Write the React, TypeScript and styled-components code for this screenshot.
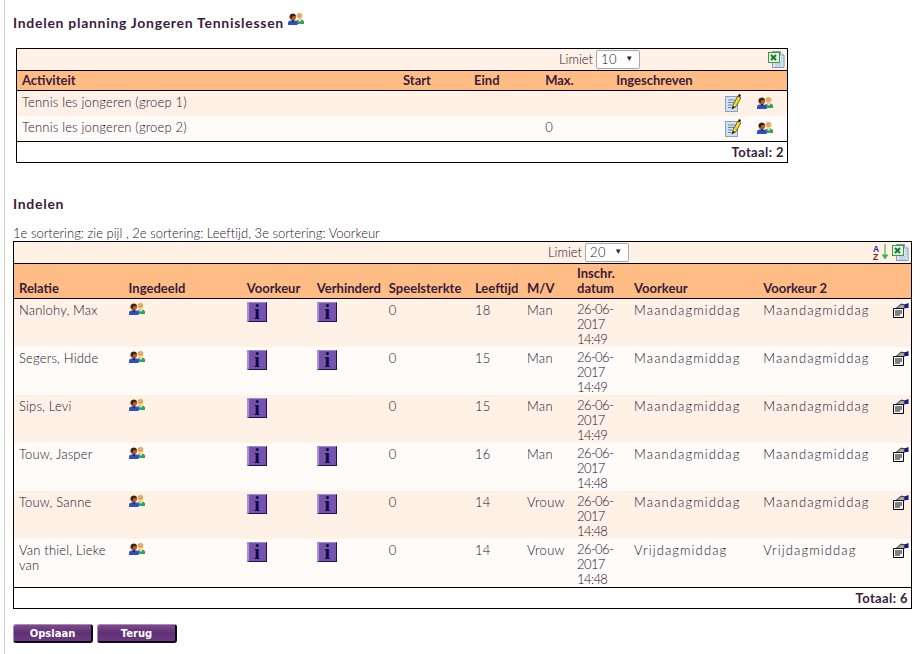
import React from 'react';
import styled, { createGlobalStyle } from 'styled-components';

const GlobalStyle = createGlobalStyle`
  html, body {
    margin: 0;
    padding: 0;
    background: #fff;
  }
  body {
    font-family: Lato, "Open Sans", sans-serif;
    font-size: 13px;
    line-height: 15px;
    font-weight: 300;
    color: #1f1030;
  }
`;

const Page = styled.div`
  box-sizing: border-box;
  width: 924px;
  height: 654px;
  overflow: hidden;
  margin-left: 4px;
  padding: 13px 0 0 8px;
  border-left: 1px solid #cfcfcf;
`;

const Title = styled.h2`
  margin: 0;
  height: 22px;
  display: flex;
  align-items: flex-start;
  gap: 4px;
  font-size: 14px;
  line-height: 20px;
  font-weight: 700;
  letter-spacing: 0.71px;
  color: #3a1c3c;
`;

const SubTitle = styled(Title)`
  margin-top: 31px;
  height: 20px;
`;

const Note = styled.div`
  margin-top: 12px;
  height: 15px;
  letter-spacing: 0.01px;
  white-space: nowrap;
`;

const Table = styled.table<{ $width: number; $indent?: number }>`
  table-layout: fixed;
  border-collapse: collapse;
  width: ${(p) => p.$width}px;
  margin-left: ${(p) => p.$indent ?? 0}px;
  border: 1px solid #000;
`;

const FirstTable = styled(Table)`
  margin-top: 13px;
`;

const ToolbarCell = styled.td`
  height: 21px;
  padding: 0;
  background: #fff1e6;
  border-bottom: 1px solid #000;
`;

const Toolbar = styled.div`
  display: flex;
  align-items: center;
  height: 21px;
  padding-right: 2px;
`;

const Limit = styled.label<{ $offset: number }>`
  display: flex;
  align-items: center;
  gap: 3px;
  margin-left: ${(p) => p.$offset}px;
`;

const SelectWrap = styled.span`
  position: relative;
  display: block;
  &::after {
    content: '▼';
    position: absolute;
    right: 7px;
    top: 1px;
    font-family: "DejaVu Sans", sans-serif;
    font-size: 8px;
    line-height: 15px;
    color: #3a1c3c;
    pointer-events: none;
  }
`;

const Select = styled.select`
  appearance: none;
  display: block;
  box-sizing: border-box;
  width: 44px;
  height: 19px;
  padding: 0 0 0 4px;
  border: 1px solid #a9a9a9;
  border-radius: 2px;
  background: #fff;
  font: inherit;
  letter-spacing: 0.4px;
  color: #1f1030;
`;

const ToolIcons = styled.div`
  display: flex;
  align-items: center;
  gap: 1px;
  margin-left: auto;
`;

const HeadCell = styled.th`
  padding: 2px 0 2px 5px;
  background: #ffbc85;
  border-bottom: 1px solid #000;
  text-align: left;
  vertical-align: bottom;
  font-weight: 700;
  letter-spacing: 0;
  color: #3a1c3c;
`;

const Row = styled.tr<{ $odd: boolean }>`
  background: ${(p) => (p.$odd ? '#fff1e6' : '#fffbf8')};
`;

const Cell = styled.td`
  padding: 4px 0 0 5px;
  vertical-align: top;
  letter-spacing: 0.17px;
`;

const ShortRowCell = styled(Cell)`
  height: 23px;
  vertical-align: middle;
  padding-top: 0;
  padding-bottom: 2px;
`;

const TallRowCell = styled(Cell)<{ $track?: number }>`
  height: 44px;
  letter-spacing: ${(p) => p.$track ?? 0.17}px;
`;

const DateCell = styled(TallRowCell)`
  height: 45px;
  padding-top: 3px;
  font-size: 13px;
  letter-spacing: -0.6px;
`;

const TotalCell = styled.td`
  height: 20px;
  padding: 0 3px 0 0;
  border-top: 1px solid #000;
  background: #fff;
  text-align: right;
  font-weight: 700;
  letter-spacing: 0.4px;
  color: #3a1c3c;
`;

const InfoButton = styled.span`
  display: block;
  box-sizing: border-box;
  width: 20px;
  height: 20px;
  margin-top: -1px;
  background: #7452ae;
  border-style: solid;
  border-width: 1px 1px 1px 2px;
  border-color: #9d86c9 #1d1650 #1d1650 #a793cf;
  text-align: center;
  font-family: "Liberation Serif", serif;
  font-size: 20px;
  font-weight: 700;
  line-height: 18px;
  color: #0d0a40;
`;

const Buttons = styled.div`
  display: flex;
  gap: 4px;
  margin-top: 15px;
`;

const Button = styled.button<{ $width: number }>`
  box-sizing: border-box;
  width: ${(p) => p.$width}px;
  height: 19px;
  padding: 0;
  border-style: solid;
  border-width: 1px 2px 2px 1px;
  border-color: #a88bb8 #120518 #120518 #a88bb8;
  border-radius: 3px;
  background: linear-gradient(#7d4a8c, #5f2f74 50%, #6b3a80);
  font-family: "DejaVu Sans", sans-serif;
  font-size: 10px;
  font-weight: 700;
  color: #fff;
`;

const IconSvg = styled.svg`
  display: block;
`;

const PeopleIcon = () => (
  <IconSvg width="16" height="12" viewBox="0 0 16 12">
    <ellipse cx="11.5" cy="2.8" rx="2.8" ry="2.8" fill="#f0a84c" />
    <path d="M8.7 2.4C8.9.2 14.1.2 14.3 2.4z" fill="#d8b070" />
    <path d="M8 11V8.5C8 7 9.8 6.4 11.8 6.4s4.2.6 4.2 2.1V11z" fill="#3f9d5a" />
    <rect x="10.5" y="6.4" width="2.5" height="2" fill="#d8f0d8" />
    <ellipse cx="4.8" cy="4" rx="3.2" ry="3.4" fill="#c9541a" />
    <path d="M1.6 4.4C1 .2 7.6-.6 8 3.4L7 2.8 4 3.4 3.4 6.2z" fill="#2a2624" />
    <path d="M0 12V9.6C0 8 2.4 7.2 5 7.2s4.6.8 4.6 2.4V12z" fill="#2c50c8" />
    <rect x="4" y="7.2" width="2" height="1.6" fill="#14206a" />
  </IconSvg>
);

const ExcelIcon = () => (
  <IconSvg width="17" height="17" viewBox="0 0 17 17">
    <path d="M4.5.5h8l3.5 3.5v12.5H4.5z" fill="#dce9f5" stroke="#7f9db9" />
    <path d="M12.5.5V4H16" fill="#fff" stroke="#7f9db9" />
    <path d="M7 13h7M7 15h7M13 7h2M13 10h2" stroke="#a9c1da" />
    <rect x="0.5" y="1.5" width="11" height="10" fill="#e5f3e0" stroke="#3c9a45" />
    <path d="M3 4l5 5M8 4l-5 5" stroke="#1b7a2a" strokeWidth="2" />
  </IconSvg>
);

const SortIcon = () => (
  <IconSvg width="19" height="17" viewBox="0 0 19 17">
    <text x="1" y="7.5" fontFamily="Liberation Sans, sans-serif" fontSize="8.5" fontWeight="700" fill="#1c1c9c">A</text>
    <text x="1" y="16" fontFamily="Liberation Sans, sans-serif" fontSize="8.5" fontWeight="700" fill="#8c1414">Z</text>
    <path d="M13 0v14" stroke="#2f9e3f" />
    <path d="M9.5 10.5h7L13 15.5z" fill="#3cb54a" />
  </IconSvg>
);

const NoteIcon = () => (
  <IconSvg width="16" height="18" viewBox="0 0 16 18">
    <rect x="0.5" y="2.5" width="12" height="15" fill="#cfe2f2" stroke="#8f9cc4" />
    <path d="M3 6h7M3 8.5h6M3 11h4M3 13.5h3" stroke="#6e86ad" />
    <path d="M7 15l1-4 5-9 3 1.6-5 9z" fill="#f6e01e" stroke="#2a2a10" strokeWidth="0.7" />
    <path d="M13 2l1-2 2 1-1 2z" fill="#111" />
    <path d="M7 15l1-3 2 1z" fill="#111" />
  </IconSvg>
);

const PropertiesIcon = () => (
  <IconSvg width="17" height="15" viewBox="0 0 17 15">
    <path d="M1.5 5.5h10v9h-10z" fill="#fff" stroke="#000" />
    <path d="M3 8h7M3 10h7M3 12h5" stroke="#000" />
    <path d="M4 5.5L9 1l4 1v3l-2 .5z" fill="#a8a8a8" stroke="#000" strokeWidth="0.8" />
    <path d="M12.5 1.5L16.5 0v5h-3.5z" fill="#14148a" />
  </IconSvg>
);

interface Activity {
  name: string;
  max?: number;
}

interface Person {
  name: string;
  blocked: boolean;
  age: number;
  gender: string;
  date: string;
  time: string;
  pref: string;
}

const activities: Activity[] = [
  { name: 'Tennis les jongeren (groep 1)' },
  { name: 'Tennis les jongeren (groep 2)', max: 0 },
];

const people: Person[] = [
  { name: 'Nanlohy, Max', blocked: true, age: 18, gender: 'Man', date: '26-06-2017', time: '14:49', pref: 'Maandagmiddag' },
  { name: 'Segers, Hidde', blocked: true, age: 15, gender: 'Man', date: '26-06-2017', time: '14:49', pref: 'Maandagmiddag' },
  { name: 'Sips, Levi', blocked: false, age: 15, gender: 'Man', date: '26-06-2017', time: '14:49', pref: 'Maandagmiddag' },
  { name: 'Touw, Jasper', blocked: true, age: 16, gender: 'Man', date: '26-06-2017', time: '14:48', pref: 'Maandagmiddag' },
  { name: 'Touw, Sanne', blocked: true, age: 14, gender: 'Vrouw', date: '26-06-2017', time: '14:48', pref: 'Maandagmiddag' },
  { name: 'Van thiel, Lieke van', blocked: true, age: 14, gender: 'Vrouw', date: '26-06-2017', time: '14:48', pref: 'Vrijdagmiddag' },
];

const planWidths = [381, 71, 71, 71, 109, 32, 35];
const peopleWidths = [110, 118, 70, 72, 86, 52, 50, 57, 129, 129, 24];

const Columns: React.FC<{ widths: number[] }> = ({ widths }) => (
  <colgroup>
    {widths.map((w, i) => (
      <col key={i} width={w} />
    ))}
  </colgroup>
);

const App: React.FC = () => (
  <Page>
    <GlobalStyle />
    <Title>
      Indelen planning Jongeren Tennislessen
      <PeopleIcon />
    </Title>

    <FirstTable $width={772} $indent={3}>
      <Columns widths={planWidths} />
      <tbody>
        <tr>
          <ToolbarCell colSpan={7}>
            <Toolbar>
              <Limit $offset={542}>
                Limiet
                <SelectWrap>
                  <Select defaultValue="10">
                    <option>10</option>
                    <option>20</option>
                  </Select>
                </SelectWrap>
              </Limit>
              <ToolIcons>
                <ExcelIcon />
              </ToolIcons>
            </Toolbar>
          </ToolbarCell>
        </tr>
        <tr>
          <HeadCell>Activiteit</HeadCell>
          <HeadCell>Start</HeadCell>
          <HeadCell>Eind</HeadCell>
          <HeadCell>Max.</HeadCell>
          <HeadCell>Ingeschreven</HeadCell>
          <HeadCell />
          <HeadCell />
        </tr>
        {activities.map((a, i) => (
          <Row key={a.name} $odd={i % 2 === 0}>
            <ShortRowCell>{a.name}</ShortRowCell>
            <ShortRowCell />
            <ShortRowCell />
            <ShortRowCell>{a.max}</ShortRowCell>
            <ShortRowCell />
            <ShortRowCell><NoteIcon /></ShortRowCell>
            <ShortRowCell><PeopleIcon /></ShortRowCell>
          </Row>
        ))}
        <tr>
          <TotalCell colSpan={7}>Totaal: 2</TotalCell>
        </tr>
      </tbody>
    </FirstTable>

    <SubTitle>Indelen</SubTitle>
    <Note>1e sortering: zie pijl , 2e sortering: Leeftijd, 3e sortering: Voorkeur</Note>

    <Table $width={899}>
      <Columns widths={peopleWidths} />
      <tbody>
        <tr>
          <ToolbarCell colSpan={11}>
            <Toolbar>
              <Limit $offset={534}>
                Limiet
                <SelectWrap>
                  <Select defaultValue="20">
                    <option>10</option>
                    <option>20</option>
                  </Select>
                </SelectWrap>
              </Limit>
              <ToolIcons>
                <SortIcon />
                <ExcelIcon />
              </ToolIcons>
            </Toolbar>
          </ToolbarCell>
        </tr>
        <tr>
          <HeadCell>Relatie</HeadCell>
          <HeadCell>Ingedeeld</HeadCell>
          <HeadCell>Voorkeur</HeadCell>
          <HeadCell>Verhinderd</HeadCell>
          <HeadCell>Speelsterkte</HeadCell>
          <HeadCell>Leeftijd</HeadCell>
          <HeadCell>M/V</HeadCell>
          <HeadCell>Inschr. datum</HeadCell>
          <HeadCell>Voorkeur</HeadCell>
          <HeadCell>Voorkeur 2</HeadCell>
          <HeadCell />
        </tr>
        {people.map((p, i) => (
          <Row key={p.name} $odd={i % 2 === 0}>
            <TallRowCell>{p.name}</TallRowCell>
            <TallRowCell><PeopleIcon /></TallRowCell>
            <TallRowCell><InfoButton>i</InfoButton></TallRowCell>
            <TallRowCell>{p.blocked && <InfoButton>i</InfoButton>}</TallRowCell>
            <TallRowCell>0</TallRowCell>
            <TallRowCell>{p.age}</TallRowCell>
            <TallRowCell $track={0.3}>{p.gender}</TallRowCell>
            <DateCell>{p.date} {p.time}</DateCell>
            <TallRowCell $track={1.1}>{p.pref}</TallRowCell>
            <TallRowCell $track={1.1}>{p.pref}</TallRowCell>
            <TallRowCell><PropertiesIcon /></TallRowCell>
          </Row>
        ))}
        <tr>
          <TotalCell colSpan={11}>Totaal: 6</TotalCell>
        </tr>
      </tbody>
    </Table>

    <Buttons>
      <Button $width={80}>Opslaan</Button>
      <Button $width={80}>Terug</Button>
    </Buttons>
  </Page>
);

export default App;
